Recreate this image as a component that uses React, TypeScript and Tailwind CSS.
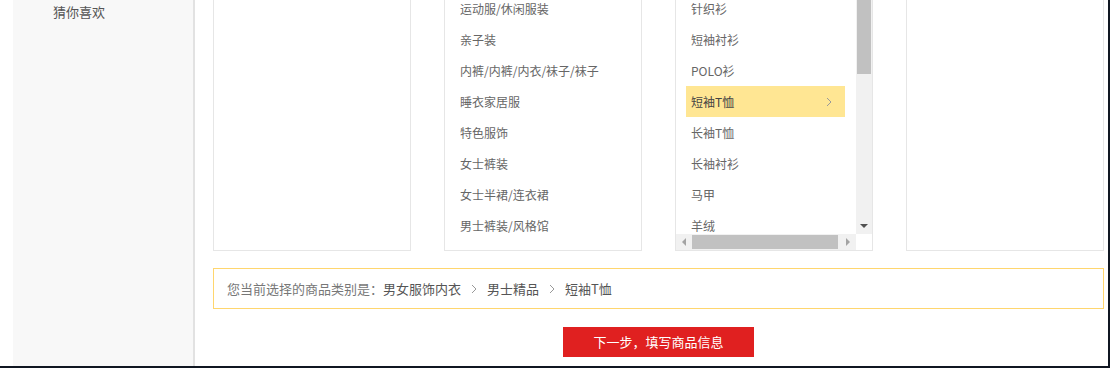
import React from 'react';

const subCategories = [
  '运动服/休闲服装',
  '亲子装',
  '内裤/内裤/内衣/袜子/袜子',
  '睡衣家居服',
  '特色服饰',
  '女士裤装',
  '女士半裙/连衣裙',
  '男士裤装/风格馆',
];

const leafCategories = [
  '针织衫',
  '短袖衬衫',
  'POLO衫',
  '短袖T恤',
  '长袖T恤',
  '长袖衬衫',
  '马甲',
  '羊绒',
];

const Chevron = ({ className = '' }: { className?: string }) => (
  <svg width="6" height="10" viewBox="0 0 6 10" className={className}>
    <polyline points="1,1 5,5 1,9" fill="none" stroke="currentColor" strokeWidth="1" />
  </svg>
);

const App = () => {
  const selected = '短袖T恤';

  return (
    <div
      className="w-[1110px] h-[368px] overflow-hidden bg-white flex border-r-2 border-b-2 border-[#101722] text-[12px]"
      style={{ fontFamily: '"Noto Sans CJK SC", "Microsoft YaHei", sans-serif' }}
    >
      <div className="w-[13px] shrink-0" />

      {/* Sidebar */}
      <aside className="w-[182px] shrink-0 bg-[#f8f8f8] border-r-2 border-[#e2e2e2]">
        <div className="pl-[40px] pt-[2px] text-[13px] leading-[20px] text-[#555]">猜你喜欢</div>
      </aside>

      {/* Main */}
      <main className="flex-1 flex flex-col pl-[18px] pr-[4px]">
        {/* Category columns */}
        <div className="flex gap-[33px] mt-[-30px] h-[281px] shrink-0">
          <div className="w-[198px] border border-[#e6e6e6]" />

          <div className="w-[198px] border border-[#e6e6e6] overflow-hidden pt-[22px] px-[10px]">
            {subCategories.map((name) => (
              <div key={name} className="h-[31px] leading-[31px] px-[5px] text-[#666] whitespace-nowrap">
                {name}
              </div>
            ))}
          </div>

          <div className="w-[198px] border border-[#e6e6e6] flex flex-col">
            <div className="flex-1 flex min-h-0">
              <div className="flex-1 overflow-hidden pt-[22px] pl-[10px] pr-[11px]">
                {leafCategories.map((name) => (
                  <div
                    key={name}
                    className={
                      name === selected
                        ? 'h-[31px] leading-[31px] px-[5px] flex items-center justify-between bg-[#ffe693] text-[#444]'
                        : 'h-[31px] leading-[31px] px-[5px] text-[#666]'
                    }
                  >
                    <span>{name}</span>
                    {name === selected && <Chevron className="text-[#999] mr-[8px]" />}
                  </div>
                ))}
              </div>
              {/* vertical scrollbar */}
              <div className="w-[16px] bg-[#f1f1f1] flex flex-col">
                <div className="h-[16px]" />
                <div className="h-[87px] mx-[1px] bg-[#c1c1c1]" />
                <div className="flex-1" />
                <div className="h-[16px] flex items-center justify-center">
                  <div className="w-0 h-0 border-l-[4px] border-r-[4px] border-t-[4px] border-l-transparent border-r-transparent border-t-[#505050]" />
                </div>
              </div>
            </div>
            {/* horizontal scrollbar */}
            <div className="h-[16px] flex">
              <div className="flex-1 flex bg-[#f1f1f1]">
                <div className="w-[16px] flex items-center justify-center">
                  <div className="w-0 h-0 border-t-[4px] border-b-[4px] border-r-[4px] border-t-transparent border-b-transparent border-r-[#a3a3a3]" />
                </div>
                <div className="w-[146px] my-[1px] bg-[#c1c1c1]" />
                <div className="flex-1" />
                <div className="w-[16px] flex items-center justify-center">
                  <div className="w-0 h-0 border-t-[4px] border-b-[4px] border-l-[4px] border-t-transparent border-b-transparent border-l-[#a3a3a3]" />
                </div>
              </div>
              <div className="w-[16px] bg-white" />
            </div>
          </div>

          <div className="w-[198px] border border-[#e6e6e6]" />
        </div>

        {/* Breadcrumb */}
        <div className="mt-[17px] h-[41px] border border-[#ffd66e] flex items-center pl-[13px] text-[13px]">
          <span className="text-[#777]">您当前选择的商品类别是：</span>
          <span className="text-[#555]">男女服饰内衣</span>
          <Chevron className="text-[#999] mx-[10px]" />
          <span className="text-[#555]">男士精品</span>
          <Chevron className="text-[#999] mx-[10px]" />
          <span className="text-[#555]">短袖T恤</span>
        </div>

        {/* Next step */}
        <div className="mt-[18px] flex justify-center">
          <button className="w-[191px] h-[30px] bg-[#e02020] text-white text-[13px]">
            下一步，填写商品信息
          </button>
        </div>
      </main>
    </div>
  );
};

export default App;
